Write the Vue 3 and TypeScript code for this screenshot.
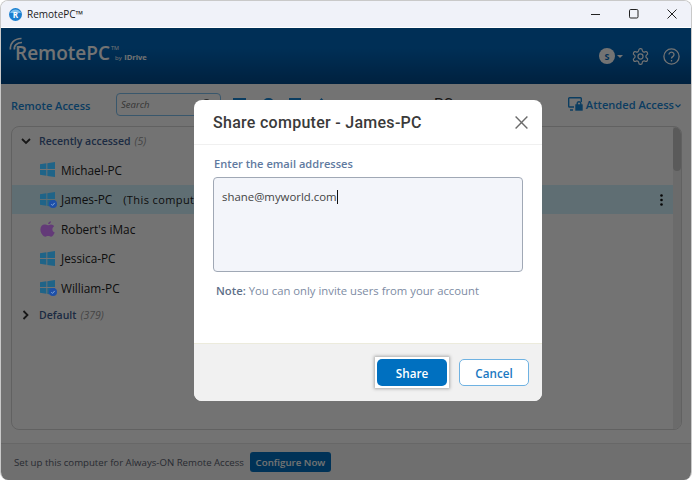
<script setup lang="ts">
interface Row { name: string; note?: string; os: 'win' | 'mac'; badge?: boolean; active?: boolean }
const rows: Row[] = [
  { name: 'Michael-PC', os: 'win' },
  { name: 'James-PC', note: '(This computer)', os: 'win', badge: true, active: true },
  { name: "Robert's iMac", os: 'mac' },
  { name: 'Jessica-PC', os: 'win' },
  { name: 'William-PC', os: 'win', badge: true },
]
</script>

<template>
  <div class="win">
    <div class="titlebar">
      <svg class="appicon" width="13" height="13" viewBox="0 0 13 13">
        <circle cx="6.5" cy="6.5" r="6.5" fill="#1a7fd0" />
        <path d="M1 5a6 6 0 0 1 11 0z" fill="#7cc0ee" />
        <text x="6.5" y="9.5" font-size="8" font-weight="700" fill="#fff" text-anchor="middle" font-family="Open Sans">R</text>
      </svg>
      <span class="apptitle">RemotePC™</span>
      <div class="winbtns">
        <svg width="10" height="10" viewBox="0 0 10 10"><path d="M0 5.5h9" stroke="#222" fill="none" /></svg>
        <svg width="10" height="10" viewBox="0 0 10 10"><rect x=".5" y=".5" width="8.5" height="8.5" rx="1.2" stroke="#222" fill="none" /></svg>
        <svg width="10" height="10" viewBox="0 0 10 10"><path d="M.5.5l9 9M9.5.5l-9 9" stroke="#222" fill="none" /></svg>
      </div>
    </div>

    <div class="main">
      <header class="head">
        <div class="logo">
          <svg class="arcs" width="15" height="15" viewBox="0 0 15 15" fill="none" stroke="#fff" stroke-width="1.7">
            <path d="M1.500 12.500C.5 7 5 1.500 12.500 1.500" />
            <path d="M5.500 12.500C4.500 9 8 5.500 13 5.500" />
          </svg>
          <span class="brand">RemotePC</span><sup class="tm">TM</sup><span class="by">by <b>IDrive</b></span>
        </div>
        <div class="headicons">
          <span class="avatar">S</span><i class="caret"></i>
          <svg class="gear" width="19" height="19" viewBox="0 0 24 24" fill="none" stroke="#fff" stroke-width="1.5">
            <path d="M12.22 2h-.44a2 2 0 0 0-2 2v.18a2 2 0 0 1-1 1.73l-.43.25a2 2 0 0 1-2 0l-.15-.08a2 2 0 0 0-2.73.73l-.22.38a2 2 0 0 0 .73 2.73l.15.1a2 2 0 0 1 1 1.72v.51a2 2 0 0 1-1 1.74l-.15.09a2 2 0 0 0-.73 2.73l.22.38a2 2 0 0 0 2.73.73l.15-.08a2 2 0 0 1 2 0l.43.25a2 2 0 0 1 1 1.73V20a2 2 0 0 0 2 2h.44a2 2 0 0 0 2-2v-.18a2 2 0 0 1 1-1.73l.43-.25a2 2 0 0 1 2 0l.15.08a2 2 0 0 0 2.73-.73l.22-.39a2 2 0 0 0-.73-2.73l-.15-.08a2 2 0 0 1-1-1.74v-.5a2 2 0 0 1 1-1.74l.15-.09a2 2 0 0 0 .73-2.73l-.22-.38a2 2 0 0 0-2.73-.73l-.15.08a2 2 0 0 1-2 0l-.43-.25a2 2 0 0 1-1-1.73V4a2 2 0 0 0-2-2z" />
            <circle cx="12" cy="12" r="3.2" />
          </svg>
          <svg class="help" width="17" height="17" viewBox="0 0 17 17" fill="none" stroke="#fff" stroke-width="1.3">
            <circle cx="8.5" cy="8.5" r="7.6" />
            <path d="M6 6.500a2.500 2.400 0 1 1 3.800 2.100c-.9.500-1.300 1-1.300 2" />
            <path d="M8.500 12v1.500" />
          </svg>
        </div>
      </header>

      <div class="toolbar">
        <span class="ra">Remote Access</span>
        <div class="search">
          <span>Search</span>
          <svg class="glass" width="11" height="11" viewBox="0 0 11 11" fill="none" stroke="#666" stroke-width="1.2"><circle cx="4.500" cy="4.500" r="3.800" /><path d="M7.300 7.300L10.500 10.500" /></svg>
        </div>
        <div class="tools">
          <i class="tool t1"></i>
          <i class="tool t2"></i>
          <i class="tool t3"></i>
          <i class="tool t4"></i>
        </div>
        <span class="crumb">PC</span>
        <div class="attended">
          <svg width="15" height="14" viewBox="0 0 15 14" fill="none" stroke="#1a88d8" stroke-width="1.4">
            <path d="M6 10H1.500A.8.800 0 0 1 .7 9.200V1.500A.8.800 0 0 1 1.500.7h11a.8.800 0 0 1 .8.800V5" />
            <path d="M2 13h3" />
            <rect x="8" y="8" width="6" height="5" fill="#1a88d8" />
            <path d="M9.200 8V6.500a1.800 1.800 0 0 1 3.600 0V8" />
          </svg>
          <span>Attended Access</span>
          <svg class="attcaret" width="6" height="4" viewBox="0 0 6 4" fill="none" stroke="#1a88d8" stroke-width="1.2"><path d="M.5.500L3 3 5.500.500" /></svg>
        </div>
      </div>

      <section class="panel">
        <div class="scroll"><div class="thumb"></div></div>
        <div class="group">
          <svg width="10" height="7" viewBox="0 0 10 7" fill="none" stroke="#333" stroke-width="1.8"><path d="M1 1l4 4 4-4" /></svg>
          <b>Recently accessed</b> <em>(5)</em>
        </div>
        <div v-for="r in rows" :key="r.name" class="row" :class="{ active: r.active }">
          <span class="os">
            <svg v-if="r.os === 'win'" width="15" height="15" viewBox="0 0 16 16" fill="#1f6488">
              <path d="M0 2.400L6.800 1.400V7.500H0zM7.800 1.200L16 0v7.500H7.800zM0 8.500h6.800v6.100L0 13.600zM7.800 8.500H16V16L7.800 14.800z" />
            </svg>
            <svg v-else width="15" height="16" viewBox="0 0 15 16" fill="#633a78">
              <path d="M11 .2c.1 1.400-1.300 3-2.900 2.900C8 1.700 9.500.3 11 .2zM7.900 4.200c.8 0 1.700-.8 3.100-.8 1.300 0 2.500.7 3.200 1.800-2.700 1.600-2.300 5.300.5 6.400-.7 1.700-2 4.200-3.600 4.200-1.100 0-1.500-.7-2.900-.7s-1.900.7-2.900.7C3 15.800.4 11.900.4 8.600c0-3.200 2.100-5.100 4.100-5.100 1.400 0 2.500.7 3.400.7z" />
            </svg>
            <svg v-if="r.badge" class="badge" width="8" height="8" viewBox="0 0 8 8">
              <circle cx="4" cy="4" r="4" fill="#1d4fa8" />
              <path d="M2.300 4.200l1.200 1.200 2.200-2.500" fill="none" stroke="#8fb0e0" stroke-width=".9" />
            </svg>
          </span>
          <span class="name">{{ r.name }}</span>
          <span v-if="r.note" class="note">{{ r.note }}</span>
          <svg v-if="r.active" class="dots" width="3" height="12" viewBox="0 0 3 12" fill="#111">
            <circle cx="1.5" cy="1.5" r="1.3" /><circle cx="1.5" cy="6" r="1.3" /><circle cx="1.5" cy="10.5" r="1.3" />
          </svg>
        </div>
        <div class="group def">
          <svg width="7" height="10" viewBox="0 0 7 10" fill="none" stroke="#333" stroke-width="1.8"><path d="M1 1l4 4-4 4" /></svg>
          <b>Default</b> <em>(379)</em>
        </div>
      </section>

      <footer class="foot">
        <span>Set up this computer for Always-ON Remote Access</span>
        <button class="cfg" type="button">Configure Now</button>
      </footer>

      <div class="overlay">
        <div class="modal">
          <div class="mhead">
            <h2>Share computer - James-PC</h2>
            <svg width="13" height="13" viewBox="0 0 13 13" fill="none" stroke="#6b6b6b" stroke-width="1.4"><path d="M.6.600l11.800 11.800M12.400.600L.6 12.400" /></svg>
          </div>
          <div class="mbody">
            <label>Enter the email addresses</label>
            <div class="ta"><span>shane@myworld.com</span><i class="cursor"></i></div>
            <p class="hint"><b>Note:</b> You can only invite users from your account</p>
          </div>
          <div class="mfoot">
            <span class="focus"><button class="share" type="button">Share</button></span>
            <button class="cancel" type="button">Cancel</button>
          </div>
        </div>
      </div>
    </div>
  </div>
</template>

<style>
html, body { margin: 0; background: #fff; }
</style>

<style scoped>
.win {
  width: 692px; height: 480px; box-sizing: border-box; display: flex; flex-direction: column;
  border: 1px solid #c9c9c9; border-bottom: 0; border-radius: 8px; overflow: hidden;
  font-family: "Open Sans", sans-serif; background: #fff;
}
.titlebar { height: 26px; flex: none; background: #f0f2f9; display: flex; align-items: center; padding-left: 8px; }
.apptitle { font-size: 10px; color: #1a1a1a; margin-left: 5px; }
.winbtns { margin-left: auto; display: flex; gap: 28px; padding-right: 14px; }
.main { flex: 1; position: relative; display: flex; flex-direction: column; min-height: 0; border-top: 1px solid #fff; }
.head {
  height: 56px; flex: none; display: flex; align-items: center; justify-content: space-between;
  background: linear-gradient(#0069bf 35%, #004a8c); padding: 0 11px 0 8px;
}
.logo { position: relative; display: flex; align-items: baseline; color: #fff; padding-bottom: 6px; }
.arcs { position: absolute; left: 0; top: -3px; }
.brand { font-size: 19px; font-weight: 600; margin-left: 6px; }
.tm { font-size: 5.5px; margin-left: 1px; align-self: flex-start; margin-top: 6px; line-height: 1; }
.by { font-size: 6px; margin-left: -4px; }
.by b { font-size: 7.5px; margin-left: 1px; }
.headicons { display: flex; align-items: center; }
.avatar {
  width: 16px; height: 16px; border-radius: 50%; background: #fff; color: #0069bf; font-size: 9px; font-weight: 700;
  display: flex; align-items: center; justify-content: center;
}
.caret { border: 3px solid transparent; border-top-color: #fff; margin: 3px 0 0 2px; }
.gear { margin-left: 8px; }
.help { margin-left: 13px; }
.toolbar { height: 42px; flex: none; display: flex; align-items: center; background: #fff; padding: 0 10px 0 10px; }
.ra { font-size: 11px; font-weight: 600; color: #1a88d8; width: 105px; flex: none; }
.search { width: 105px; height: 23px; flex: none; box-sizing: border-box; border: 1px solid #7fc0f0; border-radius: 4px; padding: 0 7px 0 4px; font-size: 9.5px; font-style: italic; color: #777; display: flex; align-items: center; justify-content: space-between; margin-top: -2px; }
.tools { display: flex; margin-left: 12px; align-self: flex-start; margin-top: 14px; }
.tool { height: 14px; background: #1a88d8; display: block; }
.t1 { width: 13px; }
.t2 { width: 11px; margin-left: 17px; border-radius: 5px 5px 0 0; }
.t3 { width: 12px; margin-left: 15px; }
.t4 { width: 9px; margin-left: 16px; clip-path: polygon(50% 0, 100% 35%, 100% 100%, 0 100%, 0 35%); }
.crumb { margin-left: 108px; font: 15px Roboto, sans-serif; color: #333; margin-top: -2px; }
.attended { margin-left: auto; display: flex; align-items: center; gap: 3px; font-size: 11.1px; font-weight: 600; color: #1a88d8; margin-top: -2px; }
.attcaret { margin: 4px 0 0 -2px; }
.panel {
  flex: 1; min-height: 0; margin: 0 9px 13px 10px; border: 1px solid #d8d8d8; border-radius: 8px; position: relative; overflow: hidden; background: #fff;
}
.scroll { position: absolute; right: 0; top: 0; bottom: 0; width: 8px; background: #eee; }
.thumb { height: 44px; background: #c8c8c8; border-radius: 4px; }
.group { height: 28px; display: flex; align-items: center; gap: 4px; padding-left: 9px; font-size: 10.5px; color: #3f5f93; }
.group svg { margin-right: 4px; width: 10px; }
.group b { font-weight: 600; }
.group em { color: #999; }
.group.def { height: 24px; }
.row { height: 29.5px; display: flex; align-items: center; padding-left: 28px; font-size: 11.8px; color: #222; position: relative; margin-right: 8px; }
.row.active { background: #d2f4ff; }
.os { width: 21px; position: relative; z-index: 2; display: flex; flex: none; }
.badge { position: absolute; left: 9px; top: 8px; }
.note { margin-left: 11px; letter-spacing: .4px; font-size: 11px; }
.dots { position: absolute; right: 10px; top: 9px; }
.foot { height: 37px; flex: none; box-sizing: border-box; border-top: 1px solid #e4e4e4; display: flex; align-items: center; padding-left: 13px; font-size: 9.65px; color: #5a6170; gap: 6px; background: #f6f6f6; }
.cfg { height: 20px; width: 81px; background: #0070c0; border: 0; border-radius: 3px; color: #fff; font: 600 9.7px "Open Sans", sans-serif; padding: 0; }
.overlay { position: absolute; inset: 0; background: rgba(0, 0, 0, .55); padding: 72px 0 0 193px; }
.modal { width: 348px; height: 301px; background: #fff; border-radius: 8px; display: flex; flex-direction: column; overflow: hidden; }
.mhead { height: 45px; flex: none; display: flex; align-items: center; justify-content: space-between; padding: 1px 14px 0 19px; border-bottom: 1px solid #f0f0f0; box-sizing: border-box; }
h2 { margin: 0; font: 500 16px Roboto, sans-serif; color: #3a3a3a; letter-spacing: .28px; }
.mbody { flex: 1; padding: 11px 19px 0; }
label { display: block; font-size: 11.1px; font-weight: 600; color: #5f7aa0; line-height: 16px; margin-left: 1px; }
.ta { margin-top: 5px; width: 310px; height: 95px; box-sizing: border-box; background: #f3f5fa; border: 1px solid #a0a8b5; border-radius: 4px; padding: 10px 8px; font-size: 11.4px; color: #444; display: flex; align-items: flex-start; line-height: 17px; }
.cursor { width: 1.5px; height: 14px; margin-top: 2px; background: #111; display: block; }
.hint { margin: 11px 0 0 3px; font-size: 11.3px; color: #7d8ba3; line-height: 16px; }
.hint b { font-weight: 600; color: #5f7089; }
.mfoot { height: 58px; flex: none; box-sizing: border-box; background: #f1f1f1; border-top: 1px solid #ecebdc; display: flex; align-items: flex-start; justify-content: flex-end; padding: 13px 13px 0 0; }
.focus { display: block; padding: 2px; background: #fff; box-shadow: 0 0 3px 1px #aaa; margin-right: 10px; height: 27px; }
.share, .cancel { width: 70px; height: 27px; border-radius: 5px; font: 600 11.7px "Open Sans", sans-serif; padding: 0; box-sizing: border-box; cursor: pointer; }
.share { background: #0070c0; color: #fff; border: 0; display: block; }
.cancel { background: #fff; color: #1a78c2; border: 1px solid #6fb2e2; margin-top: 2px; }
</style>
